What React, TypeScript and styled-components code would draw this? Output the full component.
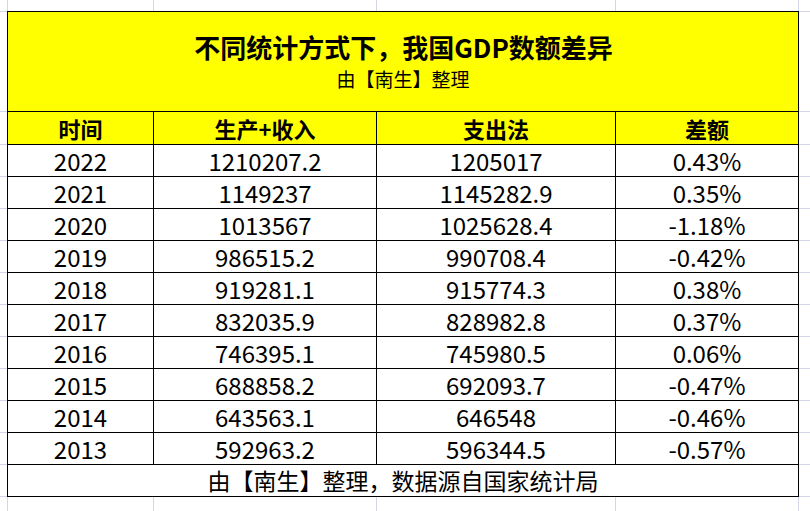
import React from "react";
import styled, { createGlobalStyle } from "styled-components";

const GRID = "#d3d6e6";
const vLines = [7, 153, 376, 615, 798];
const hLines = [11, 111, 144, 176, 208, 240, 272, 304, 336, 368, 400, 432, 464, 496];
const gridBg = [
  ...vLines.map((x) => `linear-gradient(${GRID}, ${GRID}) ${x}px 0 / 1px 100% no-repeat`),
  ...hLines.map((y) => `linear-gradient(${GRID}, ${GRID}) 0 ${y}px / 100% 1px no-repeat`),
].join(", ");

const GlobalStyle = createGlobalStyle`
  html, body { margin: 0; padding: 0; background: #fff; }
  body {
    font-family: "Noto Sans CJK SC", "Noto Sans", sans-serif;
    color: #000;
    text-spacing-trim: space-all;
  }
`;

const Sheet = styled.div`
  width: 810px;
  height: 511px;
  box-sizing: border-box;
  padding: 11px 0 0 7px;
  background: ${gridBg};
  background-color: #fff;
  overflow: hidden;
`;

const Table = styled.div`
  display: grid;
  grid-template-columns: 145px 222px 238px 182px;
  grid-template-rows: 99px 32px repeat(11, 31px);
  gap: 1px;
  width: 790px;
  background: #000;
  border: 1px solid #000;
`;

const TitleCell = styled.div`
  grid-column: 1 / -1;
  background: #ffff00;
  display: flex;
  flex-direction: column;
  align-items: center;
  box-sizing: border-box;
  padding-top: 20px;
`;

const Title = styled.div`
  font-size: 26px;
  line-height: 30px;
  font-weight: 700;
  padding-left: 1px;
`;

const Subtitle = styled.div`
  font-size: 19px;
  line-height: 24px;
  margin-top: 5px;
`;

const HeadCell = styled.div`
  background: #ffff00;
  display: flex;
  align-items: center;
  justify-content: center;
  font-size: 22px;
  font-weight: 700;
`;

const Cell = styled.div`
  background: #fff;
  display: flex;
  align-items: center;
  justify-content: center;
  font-size: 24px;
  line-height: 1;
`;

const Footer = styled(Cell)`
  grid-column: 1 / -1;
  font-size: 23px;
`;

const rows: [string, string, string, string][] = [
  ["2022", "1210207.2", "1205017", "0.43%"],
  ["2021", "1149237", "1145282.9", "0.35%"],
  ["2020", "1013567", "1025628.4", "-1.18%"],
  ["2019", "986515.2", "990708.4", "-0.42%"],
  ["2018", "919281.1", "915774.3", "0.38%"],
  ["2017", "832035.9", "828982.8", "0.37%"],
  ["2016", "746395.1", "745980.5", "0.06%"],
  ["2015", "688858.2", "692093.7", "-0.47%"],
  ["2014", "643563.1", "646548", "-0.46%"],
  ["2013", "592963.2", "596344.5", "-0.57%"],
];

const headers = ["时间", "生产+收入", "支出法", "差额"];

export default function App() {
  return (
    <>
      <GlobalStyle />
      <Sheet>
        <Table>
          <TitleCell>
            <Title>不同统计方式下，我国GDP数额差异</Title>
            <Subtitle>由【南生】整理</Subtitle>
          </TitleCell>
          {headers.map((h) => (
            <HeadCell key={h}>{h}</HeadCell>
          ))}
          {rows.map((r) =>
            r.map((v, i) => <Cell key={r[0] + i}>{v}</Cell>)
          )}
          <Footer>由【南生】整理，数据源自国家统计局</Footer>
        </Table>
      </Sheet>
    </>
  );
}
